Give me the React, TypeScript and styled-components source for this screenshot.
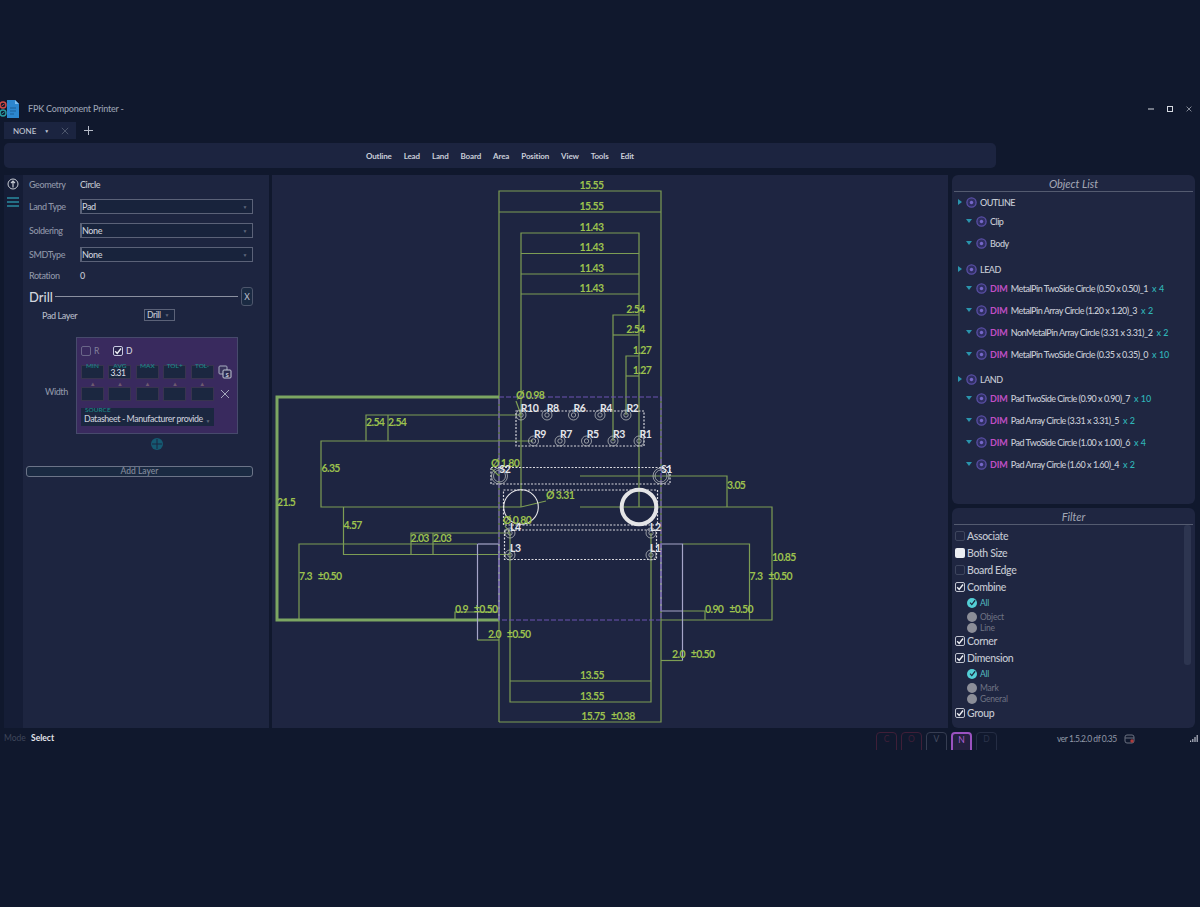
import React from "react";
import styled, { createGlobalStyle } from "styled-components";

const UI = `"Lato", "Noto Sans", sans-serif`;

const Global = createGlobalStyle`
  html, body { margin: 0; padding: 0; background: #10182d; height: 907px; overflow: hidden; }
  body { font-family: ${UI}; color: #d8dbe4; }
  * { box-sizing: border-box; }
`;

const Shell = styled.div`
  padding-top: 97px;
  width: 1200px;
`;
const TitleBar = styled.div`
  height: 23px;
  display: flex;
  align-items: center;
  padding-right: 8px;
`;
const AppLogo = styled.svg`
  width: 20px;
  height: 20px;
  flex: none;
  margin-top: 1px;
`;
const AppTitle = styled.span`
  margin-left: 8px;
  font-size: 9px;
  font-weight: 500;
  letter-spacing: -0.2px;
  color: #9aa1b2;
  flex: 1;
`;
const WinControls = styled.div`
  display: flex;
  align-items: center;
  gap: 13px;
  color: #d5d8e0;
`;
const TabRow = styled.div`
  height: 17px;
  margin-top: 2px;
  margin-left: 4px;
  display: flex;
  align-items: center;
`;
const Tab = styled.div`
  width: 72px;
  height: 17px;
  background: #1b2440;
  display: flex;
  align-items: center;
  padding-left: 9px;
  font-size: 8px;
  font-weight: 500;
  color: #c3c8d4;
`;
const TabCaret = styled.span`
  margin-left: 8px;
  font-size: 5px;
`;
const TabClose = styled.span`
  margin-left: 12px;
  display: flex;
  color: #5b6478;
`;
const TabAdd = styled.span`
  margin-left: 8px;
  display: flex;
  color: #b6bbc8;
`;
const Toolbar = styled.nav`
  height: 25px;
  width: 992px;
  margin: 4px 0 0 4px;
  background: #1c2440;
  border-radius: 5px;
  display: flex;
  align-items: center;
  padding-left: 362px;
  gap: 12px;
  font-size: 8px;
  font-weight: 700;
  letter-spacing: -0.15px;
  color: #c9cdd8;
`;
const Main = styled.main`
  margin-top: 7px;
  height: 553px;
  display: flex;
  padding-left: 4px;
`;
const Rail = styled.div`
  width: 19px;
  flex: none;
  background: #151d36;
  display: flex;
  flex-direction: column;
  align-items: center;
  gap: 7px;
  padding: 3px 1px 0 0;
`;
const LeftPanel = styled.section`
  width: 246px;
  flex: none;
  background: #1d2540;
  padding: 0 16px 0 6px;
  font-size: 9px;
  font-weight: 500;
  letter-spacing: -0.4px;
  color: #9097a8;
`;
const FieldRow = styled.div<{ $h: number }>`
  height: ${(p) => p.$h}px;
  display: flex;
  align-items: center;
`;
const FieldLabel = styled.span`
  width: 51px;
  flex: none;
  color: #8f96a8;
`;
const FieldValue = styled.span`
  color: #c4c8d2;
`;
const SelectBox = styled.div`
  height: 15px;
  flex: 1;
  background: #18233c;
  border: 1px solid #5b6278;
  border-left-width: 2px;
  display: flex;
  align-items: center;
  justify-content: space-between;
  padding: 0 5px 0 0;
  color: #ccd0da;
`;
const Caret = styled.span`
  font-size: 5px;
  color: #5f677c;
`;
const DrillHead = styled.div`
  height: 25px;
  display: flex;
  align-items: center;
`;
const DrillTitle = styled.span`
  font-size: 13px;
  font-weight: 500;
  letter-spacing: 0;
  color: #d2d5dd;
`;
const DrillRule = styled.span`
  flex: 1;
  height: 1px;
  background: #8b90a0;
  margin: 0 3px 0 2px;
`;
const SquareBtn = styled.button`
  width: 12px;
  height: 19px;
  padding: 0;
  background: #1a2a42;
  border: 1px solid #4e566c;
  border-radius: 3px;
  color: #b6bcc8;
  font: 500 8.5px ${UI};
`;
const PadLayerRow = styled.div`
  height: 12px;
  display: flex;
  align-items: center;
  padding-left: 13px;
  color: #b5bac6;
`;
const PadLayerName = styled.span`
  width: 102px;
`;
const MiniSelect = styled.div`
  width: 31px;
  height: 12px;
  background: #1a2540;
  border: 1px solid #5b6278;
  display: flex;
  align-items: center;
  justify-content: space-between;
  padding: 0 5px 0 2px;
  color: #c4c8d2;
  font-size: 8.5px;
`;
const WidthRow = styled.div`
  margin-top: 16px;
  display: flex;
`;
const WidthLabel = styled.span`
  width: 47px;
  flex: none;
  padding: 49px 0 0 16px;
`;
const DimCard = styled.div`
  width: 162px;
  height: 97px;
  background: #392a5e;
  border: 1px solid #474a6c;
  padding: 0 4px;
`;
const CheckLine = styled.div`
  height: 10px;
  margin-top: 8px;
  display: flex;
  align-items: center;
  font-size: 8.5px;
`;
const MiniCheck = styled.span<{ $on?: boolean }>`
  width: 10px;
  height: 10px;
  border: 1px solid ${(p) => (p.$on ? "#c8c8e0" : "#6a6688")};
  border-radius: 2px;
  display: flex;
  align-items: center;
  justify-content: center;
  background: ${(p) => (p.$on ? "#2b2550" : "transparent")};
`;
const CheckText = styled.span<{ $on?: boolean }>`
  margin: 0 ${(p) => (p.$on ? 0 : 14)}px 0 3px;
  color: ${(p) => (p.$on ? "#d2d2e0" : "#7f7c98")};
`;
const DimGrid = styled.div`
  margin-top: 9px;
  display: grid;
  grid-template-columns: repeat(5, 23px) 14px;
  grid-template-rows: 14px 8px 14px;
  column-gap: 4.4px;
`;
const DimInput = styled.div`
  position: relative;
  background: #1b2740;
  border: 1px solid #38344f;
  color: #d6d8e0;
  font-size: 8.5px;
  line-height: 14px;
  padding-left: 1px;
`;
const DimTag = styled.span`
  position: absolute;
  top: -4px;
  left: 0;
  right: 0;
  text-align: center;
  font-size: 6.5px;
  line-height: 7px;
  letter-spacing: 0;
  color: #1c8b8b;
`;
const ArrowCell = styled.span`
  display: flex;
  align-items: center;
  justify-content: center;
  font-size: 6px;
  color: #6e5a70;
`;
const ToolCell = styled.span`
  display: flex;
  align-items: center;
  justify-content: center;
`;
const SourceSelect = styled.div`
  position: relative;
  width: 133px;
  height: 18px;
  margin-top: 7px;
  background: #1b2740;
  display: flex;
  align-items: flex-end;
  justify-content: space-between;
  padding: 0 4px 2px 3px;
  font-size: 8.8px;
  color: #c9ccd8;
  white-space: nowrap;
`;
const SourceTag = styled.span`
  position: absolute;
  left: 4px;
  top: -2px;
  font-size: 6.5px;
  line-height: 7px;
  letter-spacing: 0;
  color: #1c8b8b;
`;
const AddDim = styled.div`
  margin: 4px 0 0 47px;
  display: flex;
  justify-content: center;
  width: 162px;
`;
const AddLayer = styled.button`
  display: block;
  width: 227px;
  height: 11px;
  margin: 16px 0 0 -3px;
  padding: 0;
  background: #1a2a42;
  border: 1px solid #6c7488;
  border-radius: 3px;
  color: #858c9e;
  font: 500 8.5px/9px ${UI};
`;
const Canvas = styled.div`
  width: 676px;
  flex: none;
  margin-left: 3px;
  background: #1e2541;
`;
const Drawing = styled.svg`
  display: block;
  width: 676px;
  height: 553px;
`;
const DimText = styled.text`
  font: 700 10.5px ${UI};
  letter-spacing: -0.6px;
  fill: #9cc14e;
  dominant-baseline: central;
`;
const PadText = styled.text`
  font: 700 10.5px ${UI};
  letter-spacing: -0.4px;
  fill: #e4e6ea;
  dominant-baseline: central;
`;
const RightColumn = styled.div`
  width: 243px;
  flex: none;
  margin-left: 4px;
  display: flex;
  flex-direction: column;
  gap: 4px;
`;
const SidePanel = styled.section<{ $h: number }>`
  height: ${(p) => p.$h}px;
  background: #1f2641;
  border-radius: 6px;
  overflow: hidden;
`;
const PanelTitle = styled.h2<{ $h: number }>`
  margin: 0 2px;
  height: ${(p) => p.$h}px;
  border-bottom: 1px solid #545b70;
  text-align: center;
  font: italic 400 11px/${(p) => p.$h + 1}px ${UI};
  color: #a4a8b6;
`;
const TreeRow = styled.div<{ $gap: number; $child?: boolean }>`
  height: 16px;
  margin-top: ${(p) => p.$gap}px;
  display: flex;
  align-items: center;
  padding-left: ${(p) => (p.$child ? 14 : 6)}px;
  font-size: 9px;
  font-weight: 500;
  letter-spacing: -0.5px;
  color: #c8ccd6;
  white-space: nowrap;
`;
const TreeIcon = styled.svg`
  flex: none;
  margin-left: 4px;
  margin-right: 3px;
`;
const DimTagText = styled.span`
  color: #c04fc4;
  font-weight: 700;
  letter-spacing: -0.1px;
  margin-right: 3px;
`;
const Count = styled.span`
  color: #2fb4b8;
  letter-spacing: 0;
  margin-left: 4px;
`;
const FilterBody = styled.div`
  position: relative;
  padding: 2px 0 0 3px;
`;
const ScrollThumb = styled.span`
  position: absolute;
  top: 0;
  right: 4px;
  width: 7px;
  height: 140px;
  border-radius: 3px;
  background: #2d3550;
`;
const CheckRow = styled.div`
  height: 17px;
  display: flex;
  align-items: center;
  font-size: 10.5px;
  font-weight: 500;
  letter-spacing: -0.35px;
  color: #c4c8d2;
`;
const CheckBox = styled.span<{ $state: "off" | "on" | "mixed" }>`
  width: 10px;
  height: 10px;
  margin-right: 2px;
  flex: none;
  border-radius: 2px;
  border: 1px solid ${(p) => (p.$state === "off" ? "#3e465e" : p.$state === "on" ? "#bfc3cf" : "transparent")};
  background: ${(p) => (p.$state === "mixed" ? "#eceef2" : "transparent")};
  display: flex;
  align-items: center;
  justify-content: center;
`;
const RadioRow = styled.div<{ $h: number }>`
  height: ${(p) => p.$h}px;
  padding-left: 12px;
  display: flex;
  align-items: center;
  font-size: 8.5px;
  letter-spacing: -0.2px;
`;
const Radio = styled.span<{ $on?: boolean }>`
  width: 10px;
  height: 10px;
  flex: none;
  border-radius: 50%;
  margin-right: 3px;
  background: ${(p) => (p.$on ? "#54cfd6" : "#8c8e98")};
  display: flex;
  align-items: center;
  justify-content: center;
`;
const RadioText = styled.span<{ $on?: boolean }>`
  color: ${(p) => (p.$on ? "#54bcc2" : "#6f7484")};
`;
const StatusBar = styled.footer`
  height: 22px;
  display: flex;
  align-items: flex-start;
  overflow: hidden;
  font-size: 8.5px;
`;
const ModeLabel = styled.span`
  margin: 5px 0 0 4px;
  width: 27px;
  flex: none;
  color: #3f465a;
`;
const ModeValue = styled.span`
  margin-top: 5px;
  width: 845px;
  flex: none;
  color: #e2e4ea;
  font-weight: 700;
`;
const ModeKey = styled.span<{ $tone: "red" | "grey" | "purple" | "dim" }>`
  width: 21px;
  height: 24px;
  margin: 4px 4px 0 0;
  flex: none;
  border: ${(p) => (p.$tone === "purple" ? 2 : 1)}px solid
    ${(p) => ({ red: "#3f1f38", grey: "#363d52", purple: "#9a52c0", dim: "#252d44" }[p.$tone])};
  border-radius: 4px;
  text-align: center;
  line-height: 13px;
  color: ${(p) => ({ red: "#3f1f38", grey: "#444b60", purple: "#b060d8", dim: "#2b334a" }[p.$tone])};
  background: ${(p) => (p.$tone === "purple" ? "#24203f" : "transparent")};
`;
const Version = styled.span`
  margin: 6px 0 0 56px;
  width: 67px;
  flex: none;
  color: #9298a8;
  white-space: nowrap;
  letter-spacing: -0.45px;
`;
const StatusIcon = styled.svg`
  margin-top: 6px;
  flex: none;
`;
const SignalIcon = styled.svg`
  margin: 7px 0 0 55px;
  flex: none;
`;

const G = "#7d9d54";
const L = "#a5a5c8";
type Seg = [string, string];
const greenLines: Seg[] = [
  ["499,722 499,191 661,191 661,470", G],
  ["499,212 661,212", G],
  ["521,507 521,233 639,233 639,507", G],
  ["521,253.5 639,253.5", G],
  ["521,274 639,274", G],
  ["521,294 639,294", G],
  ["613,441 613,315 639,315", G],
  ["613,335 639,335", G],
  ["626,415 626,356 639,356", G],
  ["626,376 639,376", G],
  ["366,441 366,415 521,415", G],
  ["388,415 388,441", G],
  ["533,441 321,441 321,507 521,507", G],
  ["343.5,507 343.5,554.5 510,554.5", G],
  ["411,554 411,533 510,533", G],
  ["433,533 433,554", G],
  ["477,544 299,544 299,620", G],
  ["455,620 455,612 499,612", G],
  ["510,533 510,702 651,702 651,533", G],
  ["510,681 651,681", G],
  ["499,722 661,722 661,476 727,476 727,507", G],
  ["639,507 772,507 772,620 661,620", G],
  ["683,544 749.5,544 749.5,620", G],
  ["683,611 705,611 705,620", G],
  ["661,660.5 682.5,660.5", G],
  ["580,476 661,476", G],
  ["580,507 639,507", G],
  ["516,401 521,415", G],
  ["521,507 546,501", G],
  ["492,469 499,476", G],
  ["505,526 510,533", G],
];
const lavenderLines: Seg[] = [
  ["477.5,544 499,544", L],
  ["477.5,544 477.5,640", L],
  ["499,544 499,620", L],
  ["661,544 682.5,544 682.5,660.5", L],
  ["661,544 661,611 683,611", L],
];
const pads: [string, number, number, number, number, number][] = [
  ["R10", 521, 415, 520.7, 408, 0],
  ["R8", 547, 415, 546.7, 408, 0],
  ["R6", 573.5, 415, 573.5, 408, 0],
  ["R4", 600, 415, 600, 408, 0],
  ["R2", 626, 415, 626.5, 408, 0],
  ["R9", 533.5, 441, 534, 434, 0],
  ["R7", 560, 441, 560, 434, 0],
  ["R5", 586.5, 441, 586.7, 434, 0],
  ["R3", 613, 441, 613, 434, 0],
  ["R1", 639, 441, 639.5, 434, 0],
  ["S2", 499.5, 476, 499.3, 469, 1],
  ["S1", 661, 476, 661, 469, 1],
  ["L4", 510, 533, 510, 527, 0],
  ["L3", 510, 555, 510, 548, 0],
  ["L2", 651, 533, 650, 527, 0],
  ["L1", 651, 555, 650, 548, 0],
];
const dims: [string, number, number, boolean?][] = [
  ["15.55", 591.5, 185, true],
  ["15.55", 591.5, 205.5, true],
  ["11.43", 591.5, 226.5, true],
  ["11.43", 591.5, 247, true],
  ["11.43", 591.5, 267.5, true],
  ["11.43", 591.5, 288, true],
  ["2.54", 635.5, 308.5, true],
  ["2.54", 635.5, 329, true],
  ["1.27", 642, 349.5, true],
  ["1.27", 642, 370, true],
  ["Ø 0.98", 516, 395],
  ["2.54", 366, 422],
  ["2.54", 388, 422],
  ["6.35", 321.5, 468],
  ["21.5", 277, 502],
  ["4.57", 343.5, 525],
  ["2.03", 410.5, 538],
  ["2.03", 433, 538],
  ["7.3   ±0.50", 299, 576],
  ["0.9   ±0.50", 455, 609],
  ["2.0   ±0.50", 488, 634],
  ["Ø 1.80", 491, 463],
  ["Ø 0.80", 503, 520],
  ["Ø 3.31", 546, 495],
  ["3.05", 727, 485],
  ["10.85", 772, 557],
  ["7.3   ±0.50", 749.5, 576],
  ["0.90   ±0.50", 705, 609],
  ["2.0   ±0.50", 672, 654],
  ["13.55", 592, 675, true],
  ["13.55", 592, 696, true],
  ["15.75   ±0.38", 608, 716, true],
];
const dashedRects: [number, number, number, number][] = [
  [516, 411, 128, 35],
  [491, 467.5, 179, 16.5],
  [503.5, 490, 154, 35],
  [504.5, 530, 152, 29.5],
];

function Board() {
  return (
    <Drawing viewBox="272 175 676 553" xmlns="http://www.w3.org/2000/svg">
      {greenLines.map(([p, c], i) => (
        <polyline key={i} points={p} fill="none" stroke={c} strokeWidth={1.2} />
      ))}
      <polyline points="499,397 277,397 277,620 499,620" fill="none" stroke="#7ca662" strokeWidth={3} />
      {lavenderLines.map(([p, c], i) => (
        <polyline key={i} points={p} fill="none" stroke={c} strokeWidth={1.2} />
      ))}
      <polyline points="477.5,640 499,640" fill="none" stroke={G} strokeWidth={1.2} />
      <rect x={499} y={397} width={162} height={223} fill="none" stroke="#6d54b4" strokeWidth={1.2} strokeDasharray="5 2" />
      {dashedRects.map(([x, y, w, h], i) => (
        <rect key={i} x={x} y={y} width={w} height={h} fill="none" stroke="#d8d8de" strokeWidth={1.2} strokeDasharray="2 1.5" />
      ))}
      {pads.map(([n, cx, cy, , , big]) => (
        <g key={n} fill="none" stroke="#b4b7ba">
          <circle cx={cx} cy={cy} r={big ? 8 : 5} strokeWidth={0.8} />
          <circle cx={cx} cy={cy} r={big ? 6 : 2.2} strokeWidth={0.8} />
        </g>
      ))}
      <circle cx={521} cy={507} r={17.3} fill="none" stroke="#e8e8ea" strokeWidth={1.1} />
      <circle cx={639} cy={507} r={17.3} fill="none" stroke="#e4e4e6" strokeWidth={4} />
      {dims.map(([t, x, y, c], i) => (
        <DimText key={i} x={x} y={y} textAnchor={c ? "middle" : "start"} xmlSpace="preserve">
          {t}
        </DimText>
      ))}
      {pads.map(([n, , , tx, ty]) => (
        <PadText key={n} x={tx} y={ty}>
          {n}
        </PadText>
      ))}
    </Drawing>
  );
}

const Ring = () => (
  <TreeIcon width="11" height="11" viewBox="0 0 11 11">
    <circle cx="5.5" cy="5.5" r="4.6" fill="#2f2f62" stroke="#5a4fa6" strokeWidth="1.3" />
    <circle cx="5.5" cy="5.5" r="1.7" fill="#7668c8" />
  </TreeIcon>
);
const ArrowRight = () => (
  <svg width="4" height="6" viewBox="0 0 4 6">
    <path d="M0 0 L4 3 L0 6 Z" fill="#2a95ae" />
  </svg>
);
const ArrowDown = () => (
  <svg width="6" height="4" viewBox="0 0 6 4">
    <path d="M0 0 H6 L3 4 Z" fill="#2a95ae" />
  </svg>
);
const Check = ({ size = 8, color = "#eceef2" }: { size?: number; color?: string }) => (
  <svg width={size} height={size} viewBox="0 0 10 10">
    <path d="M1.5 5.2 L4 8 L8.8 1.8" fill="none" stroke={color} strokeWidth="1.8" />
  </svg>
);
const X = ({ size = 8, color = "currentColor", w = 1 }: { size?: number; color?: string; w?: number }) => (
  <svg width={size} height={size} viewBox="0 0 10 10">
    <path d="M1 1 L9 9 M9 1 L1 9" stroke={color} strokeWidth={w} fill="none" />
  </svg>
);

const tree: { gap: number; kind: "group" | "item"; dim?: boolean; name: string; count?: string }[] = [
  { gap: 2, kind: "group", name: "OUTLINE" },
  { gap: 3, kind: "item", name: "Clip" },
  { gap: 6, kind: "item", name: "Body" },
  { gap: 10, kind: "group", name: "LEAD" },
  { gap: 3, kind: "item", dim: true, name: "MetalPin TwoSide Circle (0.50 x 0.50)_1", count: "x 4" },
  { gap: 6, kind: "item", dim: true, name: "MetalPin Array Circle (1.20 x 1.20)_3", count: "x 2" },
  { gap: 6, kind: "item", dim: true, name: "NonMetalPin Array Circle (3.31 x 3.31)_2", count: "x 2" },
  { gap: 6, kind: "item", dim: true, name: "MetalPin TwoSide Circle (0.35 x 0.35)_0", count: "x 10" },
  { gap: 9, kind: "group", name: "LAND" },
  { gap: 3, kind: "item", dim: true, name: "Pad TwoSide Circle (0.90 x 0.90)_7", count: "x 10" },
  { gap: 6, kind: "item", dim: true, name: "Pad Array Circle (3.31 x 3.31)_5", count: "x 2" },
  { gap: 6, kind: "item", dim: true, name: "Pad TwoSide Circle (1.00 x 1.00)_6", count: "x 4" },
  { gap: 6, kind: "item", dim: true, name: "Pad Array Circle (1.60 x 1.60)_4", count: "x 2" },
];

const dimTags = ["MIN", "AVG", "MAX", "TOL+", "TOL-"];

export default function App() {
  return (
    <Shell>
      <Global />
      <TitleBar>
        <AppLogo viewBox="0 0 20 20">
          <path d="M7 1 H15 L19 5 V19 H7 Z" fill="#2c86cf" />
          <path d="M15 1 L19 5 H15 Z" fill="#7dbdf0" />
          <path d="M10 9 H16 M10 12 H16 M10 15 H14" stroke="#1a5e98" strokeWidth="1" />
          <circle cx="3" cy="6" r="3" fill="none" stroke="#d04a48" strokeWidth="1.4" />
          <path d="M1.5 7 L4.5 5" stroke="#d04a48" strokeWidth="1" />
          <circle cx="3" cy="14" r="3" fill="none" stroke="#2a9aa0" strokeWidth="1.4" />
          <path d="M1.5 15 L4.5 13" stroke="#2a9aa0" strokeWidth="1" />
        </AppLogo>
        <AppTitle>FPK Component Printer -</AppTitle>
        <WinControls>
          <svg width="6" height="6" viewBox="0 0 6 6"><path d="M0 3 H6" stroke="currentColor" /></svg>
          <svg width="6" height="6" viewBox="0 0 6 6"><rect x=".5" y=".5" width="5" height="5" fill="none" stroke="currentColor" /></svg>
          <X size={6} />
        </WinControls>
      </TitleBar>
      <TabRow>
        <Tab>
          NONE
          <TabCaret>▼</TabCaret>
          <TabClose><X size={8} /></TabClose>
        </Tab>
        <TabAdd>
          <svg width="9" height="9" viewBox="0 0 9 9"><path d="M4.5 0 V9 M0 4.5 H9" stroke="currentColor" /></svg>
        </TabAdd>
      </TabRow>
      <Toolbar>
        {["Outline", "Lead", "Land", "Board", "Area", "Position", "View", "Tools", "Edit"].map((t) => (
          <span key={t}>{t}</span>
        ))}
      </Toolbar>
      <Main>
        <Rail>
          <svg width="12" height="12" viewBox="0 0 12 12">
            <circle cx="6" cy="6" r="5" fill="none" stroke="#c8ccd4" strokeWidth="1" />
            <path d="M6 9.5 V3.2 M4 5 L6 3 L8 5" stroke="#c8ccd4" strokeWidth="1.2" fill="none" />
          </svg>
          <svg width="12" height="10" viewBox="0 0 12 10">
            <path d="M0 1 H12 M0 5 H12 M0 9 H12" stroke="#2a8ba0" strokeWidth="1.4" />
          </svg>
        </Rail>
        <LeftPanel>
          <FieldRow $h={19.5}>
            <FieldLabel>Geometry</FieldLabel>
            <FieldValue>Circle</FieldValue>
          </FieldRow>
          <FieldRow $h={24}>
            <FieldLabel>Land Type</FieldLabel>
            <SelectBox>Pad<Caret>▼</Caret></SelectBox>
          </FieldRow>
          <FieldRow $h={24}>
            <FieldLabel>Soldering</FieldLabel>
            <SelectBox>None<Caret>▼</Caret></SelectBox>
          </FieldRow>
          <FieldRow $h={24}>
            <FieldLabel>SMDType</FieldLabel>
            <SelectBox>None<Caret>▼</Caret></SelectBox>
          </FieldRow>
          <FieldRow $h={17.5}>
            <FieldLabel>Rotation</FieldLabel>
            <FieldValue>0</FieldValue>
          </FieldRow>
          <DrillHead>
            <DrillTitle>Drill</DrillTitle>
            <DrillRule />
            <SquareBtn>X</SquareBtn>
          </DrillHead>
          <PadLayerRow>
            <PadLayerName>Pad Layer</PadLayerName>
            <MiniSelect>Drill<Caret>▼</Caret></MiniSelect>
          </PadLayerRow>
          <WidthRow>
            <WidthLabel>Width</WidthLabel>
            <DimCard>
              <CheckLine>
                <MiniCheck />
                <CheckText>R</CheckText>
                <MiniCheck $on><Check size={8} /></MiniCheck>
                <CheckText $on>D</CheckText>
              </CheckLine>
              <DimGrid>
                {dimTags.map((t, i) => (
                  <DimInput key={t}>
                    <DimTag>{t}</DimTag>
                    {i === 1 ? "3.31" : ""}
                  </DimInput>
                ))}
                <ToolCell>
                  <svg width="14" height="14" viewBox="0 0 14 14">
                    <rect x="1" y="1" width="8" height="8" rx="1" fill="#39345c" stroke="#a8acc0" />
                    <rect x="5" y="5" width="8" height="8" rx="1" fill="#2c2a50" stroke="#c4c8d6" />
                    <text x="9" y="11.5" fontSize="6" fontWeight="700" fill="#c4c8d6" textAnchor="middle" fontFamily="Open Sans">S</text>
                  </svg>
                </ToolCell>
                {dimTags.map((t) => (
                  <ArrowCell key={t}>▲</ArrowCell>
                ))}
                <span />
                {dimTags.map((t) => (
                  <DimInput key={t} />
                ))}
                <ToolCell><X size={10} color="#a4a8bc" /></ToolCell>
              </DimGrid>
              <SourceSelect>
                <SourceTag>SOURCE</SourceTag>
                Datasheet - Manufacturer provide
                <Caret>▼</Caret>
              </SourceSelect>
            </DimCard>
          </WidthRow>
          <AddDim>
            <svg width="12" height="12" viewBox="0 0 12 12">
              <circle cx="6" cy="6" r="6" fill="#155a72" />
              <path d="M6 1 V11 M1 6 H11" stroke="#1d2540" strokeWidth="1" />
            </svg>
          </AddDim>
          <AddLayer>Add Layer</AddLayer>
        </LeftPanel>
        <Canvas>
          <Board />
        </Canvas>
        <RightColumn>
          <SidePanel $h={329}>
            <PanelTitle $h={17}>Object List</PanelTitle>
            {tree.map((r, i) => (
              <TreeRow key={i} $gap={r.gap} $child={r.kind === "item"}>
                {r.kind === "group" ? <ArrowRight /> : <ArrowDown />}
                <Ring />
                {r.dim && <DimTagText>DIM</DimTagText>}
                {r.name}
                {r.count && <Count>{r.count}</Count>}
              </TreeRow>
            ))}
          </SidePanel>
          <SidePanel $h={220}>
            <PanelTitle $h={17}>Filter</PanelTitle>
            <FilterBody>
              <ScrollThumb />
              <CheckRow><CheckBox $state="off" />Associate</CheckRow>
              <CheckRow><CheckBox $state="mixed" />Both Size</CheckRow>
              <CheckRow><CheckBox $state="off" />Board Edge</CheckRow>
              <CheckRow><CheckBox $state="on"><Check /></CheckBox>Combine</CheckRow>
              <RadioRow $h={15}><Radio $on><Check size={7} color="#1d2a40" /></Radio><RadioText $on>All</RadioText></RadioRow>
              <RadioRow $h={13}><Radio /><RadioText>Object</RadioText></RadioRow>
              <RadioRow $h={9}><Radio /><RadioText>Line</RadioText></RadioRow>
              <CheckRow><CheckBox $state="on"><Check /></CheckBox>Corner</CheckRow>
              <CheckRow><CheckBox $state="on"><Check /></CheckBox>Dimension</CheckRow>
              <RadioRow $h={15}><Radio $on><Check size={7} color="#1d2a40" /></Radio><RadioText $on>All</RadioText></RadioRow>
              <RadioRow $h={13}><Radio /><RadioText>Mark</RadioText></RadioRow>
              <RadioRow $h={10}><Radio /><RadioText>General</RadioText></RadioRow>
              <CheckRow><CheckBox $state="on"><Check /></CheckBox>Group</CheckRow>
            </FilterBody>
          </SidePanel>
        </RightColumn>
      </Main>
      <StatusBar>
        <ModeLabel>Mode</ModeLabel>
        <ModeValue>Select</ModeValue>
        <ModeKey $tone="red">C</ModeKey>
        <ModeKey $tone="red">O</ModeKey>
        <ModeKey $tone="grey">V</ModeKey>
        <ModeKey $tone="purple">N</ModeKey>
        <ModeKey $tone="dim">D</ModeKey>
        <Version>ver 1.5.2.0 df 0.35</Version>
        <StatusIcon width="11" height="10" viewBox="0 0 11 10">
          <rect x="1" y="1" width="9" height="8" rx="2" fill="none" stroke="#6a7080" />
          <path d="M1 4 H10" stroke="#6a7080" />
          <circle cx="8" cy="7" r="1.7" fill="#b03a3a" />
        </StatusIcon>
        <SignalIcon width="8" height="7" viewBox="0 0 8 7">
          <path d="M0 7 V5.5 H1.2 V7 Z M2.2 7 V4 H3.4 V7 Z M4.4 7 V2 H5.6 V7 Z M6.6 7 V0 H7.8 V7 Z" fill="#b6bac6" />
        </SignalIcon>
      </StatusBar>
    </Shell>
  );
}
